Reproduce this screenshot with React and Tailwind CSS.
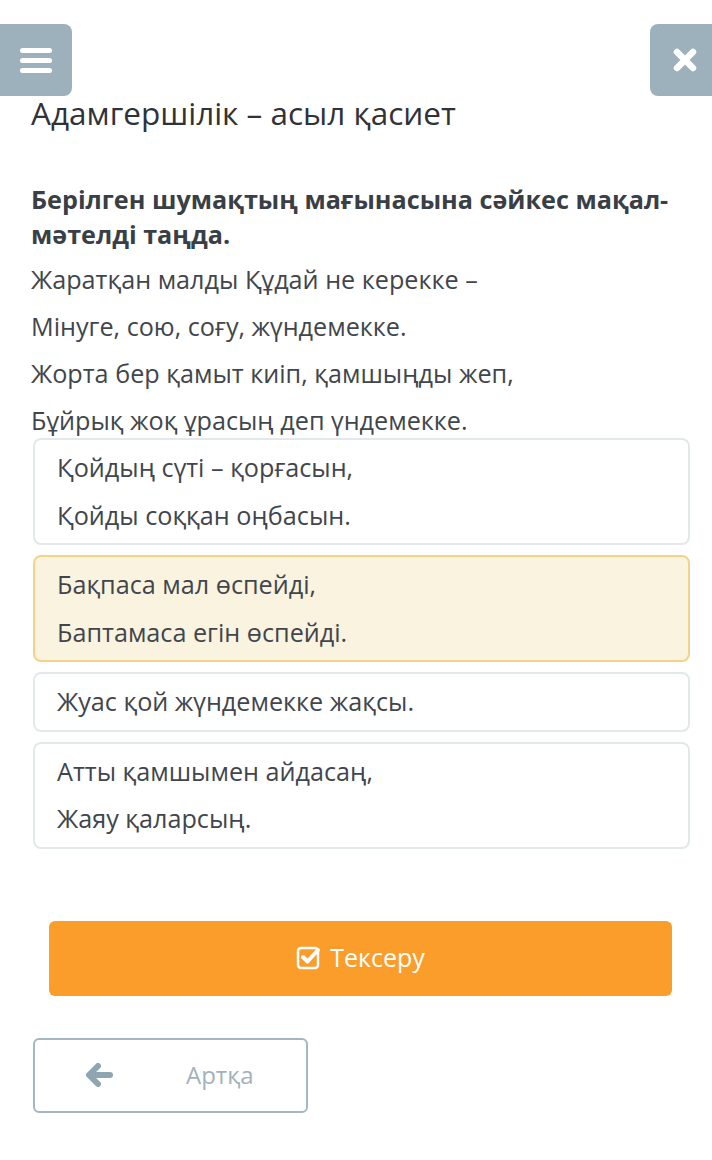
import React from "react";

const font = { fontFamily: '"Open Sans", "Noto Sans", sans-serif' };

const options = [
  { lines: ["Қойдың сүті – қорғасын,", "Қойды соққан оңбасын."] },
  { lines: ["Бақпаса мал өспейді,", "Баптамаса егін өспейді."], selected: true },
  { lines: ["Жуас қой жүндемекке жақсы."] },
  { lines: ["Атты қамшымен айдасаң,", "Жаяу қаларсың."] },
];

const App = () => {
  return (
    <div className="w-[712px] h-[1160px] bg-white text-[#3c4147] overflow-hidden" style={font}>
      {/* Top buttons */}
      <div className="flex justify-between pt-6">
        <button className="w-[72px] h-[72px] bg-[#9db1bd] rounded-r-lg flex flex-col items-center justify-center gap-[5px]">
          <span className="block w-8 h-[5px] bg-white rounded-sm"></span>
          <span className="block w-8 h-[5px] bg-white rounded-sm"></span>
          <span className="block w-8 h-[5px] bg-white rounded-sm"></span>
        </button>
        <button className="w-[62px] h-[72px] bg-[#9db1bd] rounded-l-lg flex items-center justify-center">
          <svg width="26" height="26" viewBox="0 0 26 26" className="ml-[8px]">
            <path d="M5 5 L21 21 M21 5 L5 21" stroke="white" strokeWidth="6.5" strokeLinecap="round" />
          </svg>
        </button>
      </div>

      <div className="px-[31px]">
        <h1 className="text-[31.5px] leading-[34px] text-[#2f3338]">Адамгершілік – асыл қасиет</h1>

        <p className="mt-[52px] text-[25.2px] leading-[35px] font-bold text-[#3a3f45]">
          Берілген шумақтың мағынасына сәйкес мақал-мәтелді таңда.
        </p>

        <div className="mt-[4px] text-[25.2px] leading-[47px] text-[#41464c]">
          <p>Жаратқан малды Құдай не керекке –</p>
          <p>Мінуге, сою, соғу, жүндемекке.</p>
          <p>Жорта бер қамыт киіп, қамшыңды жеп,</p>
          <p>Бұйрық жоқ ұрасың деп үндемекке.</p>
        </div>
      </div>

      {/* Options */}
      <div className="flex flex-col gap-[10px] pl-[33px] pr-[22px] mt-[-6px]">
        {options.map((o, i) => (
          <div
            key={i}
            className={`rounded-lg border-2 px-[22px] py-[4px] text-[25.2px] leading-[47.5px] text-[#41464c] ${
              o.selected ? "bg-[#faf3e0] border-[#f3d386]" : "bg-white border-[#e3e8ea]"
            }`}
          >
            {o.lines.map((l, j) => (
              <p key={j}>{l}</p>
            ))}
          </div>
        ))}
      </div>

      {/* Check button */}
      <div className="pl-[49px] pr-[40px] mt-[72px]">
        <button className="w-full h-[75px] bg-[#fa9d2a] rounded-md flex items-center justify-center gap-2 text-white text-[25px]">
          <svg width="26" height="26" viewBox="0 0 26 26">
            <rect x="2" y="3" width="20" height="20" rx="3" fill="none" stroke="white" strokeWidth="2.5" />
            <path d="M7 12 L11.5 16.5 L22 5" fill="none" stroke="white" strokeWidth="4" strokeLinecap="round" strokeLinejoin="round" />
          </svg>
          <span>Тексеру</span>
        </button>
      </div>

      {/* Back button */}
      <div className="px-[33px] mt-[42px]">
        <button className="w-[275px] h-[75px] border-2 border-[#a3b6c1] rounded-md flex items-center text-[24px] text-[#a3b2ba]">
          <svg width="28" height="24" viewBox="0 0 28 24" className="ml-[50px]">
            <path d="M13 3 L4 12 L13 21 M5 12 L25 12" fill="none" stroke="#8fa5b2" strokeWidth="6" strokeLinecap="round" strokeLinejoin="round" />
          </svg>
          <span className="ml-[73px]">Артқа</span>
        </button>
      </div>
    </div>
  );
};

export default App;
